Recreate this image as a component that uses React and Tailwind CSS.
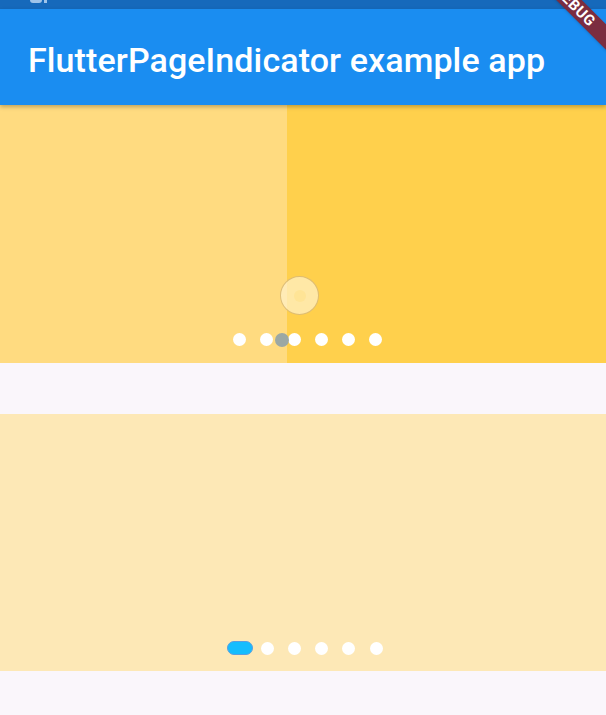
import React from 'react';

const Dot = ({ className = '' }) => (
  <div className={`w-[13px] h-[13px] rounded-full bg-white shrink-0 ${className}`} />
);

const DebugBanner = () => (
  <div className="absolute top-0 right-0 w-[80px] h-[80px] overflow-hidden pointer-events-none z-20">
    <div className="absolute left-[-26px] top-[-3px] w-[150px] h-[18px] bg-[#7b2d40] rotate-45 flex items-center justify-center shadow-sm">
      <span className="text-white text-[15px] font-bold tracking-[0.5px] leading-none" style={{ fontFamily: 'Roboto, sans-serif' }}>DEBUG</span>
    </div>
  </div>
);

export default function App() {
  return (
    <div className="relative w-[606px] h-[715px] overflow-hidden bg-[#faf6fb]" style={{ fontFamily: 'Roboto, "Noto Sans", sans-serif' }}>
      <DebugBanner />

      {/* status bar */}
      <div className="h-[9px] bg-[#1669bb] relative">
        <div className="absolute left-[30px] top-[-3px] w-[12px] h-[6px] rounded-sm bg-[#9fc4ea]" />
        <div className="absolute left-[44px] top-[-3px] w-[3px] h-[6px] bg-[#9fc4ea]" />
      </div>

      {/* app bar */}
      <div className="h-[96px] bg-[#1a8df1] flex items-center pl-[28px] pt-[6px] shadow-[0_2px_4px_rgba(0,0,0,0.25)] relative z-10">
        <h1 className="text-white text-[34px] font-medium tracking-[0.1px]">FlutterPageIndicator example app</h1>
      </div>

      {/* first pager, mid swipe */}
      <div className="relative h-[258px] flex">
        <div className="w-[287px] bg-[#ffdb80]" />
        <div className="flex-1 bg-[#ffd04c]" />

        {/* touch ripple */}
        <div className="absolute left-[280px] top-[171px] w-[39px] h-[39px] rounded-full bg-[rgba(255,242,205,0.7)] border border-[rgba(200,160,80,0.6)] flex items-center justify-center">
          <div className="w-[12px] h-[12px] rounded-full bg-[rgba(255,220,120,0.35)]" />
        </div>

        <div className="absolute left-[233px] top-[228px] flex items-center gap-[14.3px]">
          <Dot />
          <Dot />
          <Dot />
          <Dot />
          <Dot />
          <Dot />
        </div>
        <div className="absolute left-[275px] top-[228px] w-[14px] h-[14px] rounded-full bg-[#9ca8a4]" />
      </div>

      <div className="h-[51px]" />

      {/* second pager */}
      <div className="relative h-[257px] bg-[#fde8b6]">
        <div className="absolute left-[227px] top-[227px] flex items-center">
          <div className="w-[26px] h-[14px] rounded-full bg-[#14bdfe] border border-[#5a9ee0] mr-[7.5px]" />
          <div className="flex items-center gap-[14.3px]">
            <Dot />
            <Dot />
            <Dot />
            <Dot />
            <Dot />
          </div>
        </div>
      </div>
    </div>
  );
}
